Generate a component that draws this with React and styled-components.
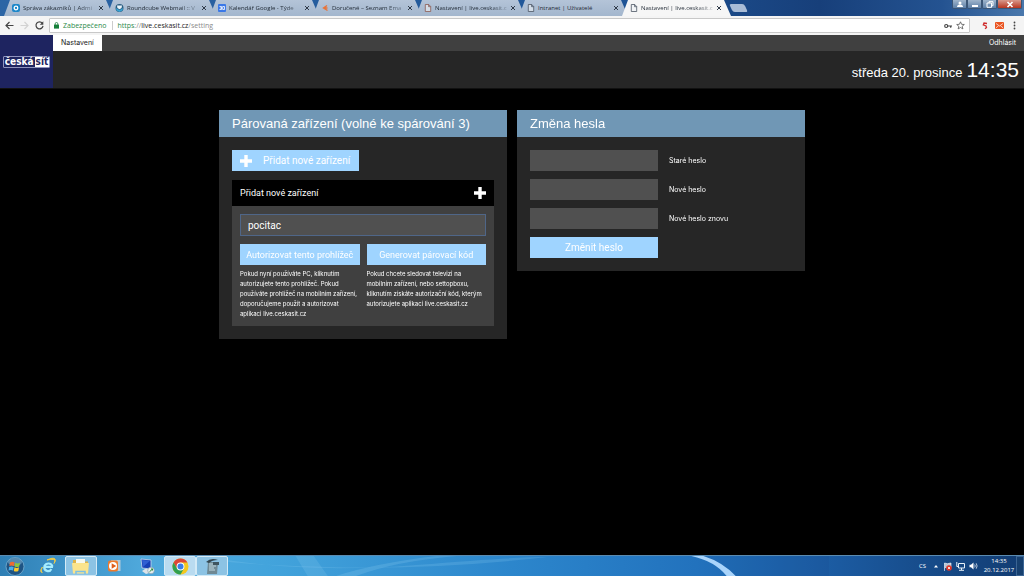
import React, { useState } from "react";
import styled, { createGlobalStyle, css } from "styled-components";

const Global = createGlobalStyle`
  *, *::before, *::after { box-sizing: border-box; }
  body { margin: 0; background: #000; color: #fff; font-family: "Liberation Sans", Arial, sans-serif; }
  button, input { font: inherit; color: inherit; border: 0; margin: 0; padding: 0; border-radius: 0; }
  a { color: inherit; text-decoration: none; }
  h1, h2, p { margin: 0; font-weight: normal; }
`;

const ui = `"Open Sans", "Noto Sans", sans-serif`;
const control = `Roboto, "Liberation Sans", sans-serif`;
const small = `Inter, "Liberation Sans", sans-serif`;

const Screen = styled.div`
  min-height: 100vh;
  display: flex;
  flex-direction: column;
`;

/* Browser window */
const TabStrip = styled.div`
  height: 16px;
  padding-left: 4px;
  display: flex;
  background: linear-gradient(90deg, #2c65a5, #1f5597 60%, #173f7a 80%, #245391 92%, #4a78ac);
  font-family: ${ui};
  font-size: 6px;
  line-height: 14px;
  color: #1f2833;
`;
const Tab = styled.div`
  width: 109px;
  margin-right: -6px;
  padding: 0 9px 0 8px;
  display: flex;
  align-items: center;
  gap: 3px;
  background: ${(p) => (p.$active ? "#f6f6f6" : "linear-gradient(#b4c4d8, #a3b6cd)")};
  clip-path: polygon(6px 0, 102px 0, 109px 100%, 0 100%);
`;
const TabTitle = styled.span`
  flex: 1;
  white-space: nowrap;
  ${(p) => p.$fade && css`mask-image: linear-gradient(90deg, #000 75%, #0004);`}
`;
const TabClose = styled.button`
  width: 6px;
  height: 6px;
  background: none;
  display: flex;
`;
const NewTab = styled.button`
  width: 15px;
  height: 8px;
  margin: 4px 0 0 6px;
  border-radius: 2px;
  background: #a9bcd6;
  transform: skewX(25deg);
`;
const WindowControls = styled.div`
  margin-left: auto;
  padding-right: 2px;
  display: flex;
  height: 9px;
`;
const WindowButton = styled.button`
  width: ${(p) => (p.$close ? 25 : 15)}px;
  display: grid;
  place-items: center;
  background: ${(p) => (p.$close ? "linear-gradient(#d99a8c, #b83620)" : "linear-gradient(#9fb5cc, #5f81a8)")};
  border: 1px solid #3b5676;
  border-top: 0;
  border-radius: 0 0 2px 2px;
`;

const Toolbar = styled.div`
  height: 19px;
  display: flex;
  align-items: center;
  gap: 4px;
  padding: 0 4px;
  background: #f4f4f4;
  font-family: ${ui};
  font-size: 7px;
`;
const ToolButton = styled.button`
  width: 11px;
  height: 11px;
  display: grid;
  place-items: center;
  background: none;
`;
const Omnibox = styled.div`
  flex: 1;
  height: 15px;
  display: flex;
  align-items: center;
  gap: 4px;
  margin-right: 5px;
  padding: 0 4px;
  background: #fff;
  border: 1px solid #c8c8c8;
  border-radius: 1px;
  color: #8a8a8a;
`;
const Secure = styled.span`
  color: #2b8a4a;
  padding-right: 6px;
  border-right: 1px solid #ccc;
  line-height: 9px;
`;
const Url = styled.span`
  flex: 1;
  em { font-style: normal; color: #2b8a4a; }
  b { font-weight: normal; color: #222; }
`;

/* Site header */
const Header = styled.header`
  display: flex;
  height: 54px;
  border-bottom: 1px solid #111;
`;
const Logo = styled.a`
  width: 53px;
  background: #1e2460;
  display: flex;
  align-items: center;
  justify-content: center;
`;
const LogoMark = styled.span`
  display: flex;
  border: 1px solid #8f93bd;
  border-radius: 1px;
  font: bold 10px/10px "DejaVu Sans Condensed", "DejaVu Sans", sans-serif;
  font-stretch: condensed;
`;
const LogoWord = styled.span`
  padding: 0 1px;
  ${(p) => p.$inverse && css`background: #fff; color: #1e2460;`}
`;
const HeaderMain = styled.div`
  flex: 1;
  display: flex;
  flex-direction: column;
`;
const NavBar = styled.nav`
  height: 16px;
  display: flex;
  justify-content: space-between;
  background: #404040;
  font-family: ${small};
  font-size: 7px;
  line-height: 16px;
`;
const NavLink = styled.a`
  padding: 0 8px;
  ${(p) => p.$active && css`background: #fff; color: #222;`}
`;
const Clock = styled.div`
  flex: 1;
  display: flex;
  justify-content: flex-end;
  align-items: baseline;
  gap: 4px;
  padding: 7px 5px 0 0;
  background: #262626;
  font-size: 13px;
  line-height: 24px;
`;
const Time = styled.time`
  font-size: 21px;
`;

/* Settings content */
const Content = styled.main`
  flex: 1;
  width: 100%;
  max-width: 586px;
  margin: 0 auto;
  padding: 21px 0;
  display: grid;
  grid-template-columns: 1fr 1fr;
  gap: 10px;
  align-items: start;
`;
const Panel = styled.section`
  background: #262626;
`;
const PanelTitle = styled.h2`
  height: 27px;
  padding: 0 13px;
  background: #7097b5;
  font-size: 13px;
  line-height: 27px;
`;
const PanelBody = styled.div`
  padding: 13px;
`;
const Button = styled.button`
  height: 21px;
  width: ${(p) => (p.$icon ? "127px" : "100%")};
  display: flex;
  align-items: center;
  justify-content: ${(p) => (p.$icon ? "flex-start" : "center")};
  gap: 11px;
  padding: ${(p) => (p.$icon ? "0 8px" : "0")};
  background: #9fd4ff;
  font-family: ${control};
  font-size: ${(p) => (p.$small ? 9 : 10)}px;
  white-space: nowrap;
`;
const DeviceBox = styled.div`
  margin-top: 9px;
  background: #404040;
`;
const DeviceHead = styled.div`
  height: 26px;
  padding: 0 8px;
  display: flex;
  align-items: center;
  justify-content: space-between;
  background: #000;
  font-family: ${control};
  font-size: 9px;
`;
const DeviceBody = styled.div`
  padding: 8px 8px 7px;
`;
const Field = styled.input`
  display: block;
  width: 100%;
  height: ${(p) => (p.$named ? 22 : 21)}px;
  padding: 0 7px;
  background: #505050;
  outline: none;
  font-family: ${control};
  font-size: 10px;
  ${(p) => p.$named && css`border: 1px solid #4f6688;`}
`;
const Choices = styled.div`
  margin-top: 8px;
  display: grid;
  grid-template-columns: 1fr 1fr;
  gap: 7px;
`;
const Help = styled.p`
  margin-top: 4px;
  font-family: ${small};
  font-size: 6px;
  line-height: 10px;
  white-space: pre;
`;
const PasswordForm = styled.form`
  display: grid;
  grid-template-columns: 128px 1fr;
  column-gap: 11px;
  row-gap: 8px;
  align-items: center;
  font-family: ${small};
  font-size: 7px;
`;

/* Taskbar */
const Taskbar = styled.footer`
  position: relative;
  height: 21px;
  display: flex;
  align-items: stretch;
  background: linear-gradient(90deg, #2f7fb5, #4fa9dc 14%, #43a4dc 26%, #2c86cc 50%, #2272bd 68%, #1b5aa0 82%, #123c72);
  border-top: 1px solid #5b8bb0;
  font-family: ${ui};
  overflow: hidden;
`;
const Streak = styled.svg`
  position: absolute;
  left: 21%;
  top: 0;
  width: 60%;
  height: 100%;
`;
const TaskButton = styled.button`
  position: relative;
  width: ${(p) => p.$w || 33}px;
  display: grid;
  place-items: center;
  background: ${(p) => (p.$open ? (p.$front ? "#b9dbf0" : "#8cc3e4") : "none")};
  border: 1px solid ${(p) => (p.$open ? "#d3eaf6" : "transparent")};
  border-radius: 2px;
`;
const Tray = styled.div`
  position: relative;
  margin-left: auto;
  display: flex;
  align-items: center;
  gap: 4px;
`;
const Lang = styled.span`
  margin-right: 3px;
  font-size: 6px;
`;
const DateTime = styled.div`
  width: 32px;
  margin-left: 1px;
  text-align: center;
  font-size: 6px;
  line-height: 9px;
  white-space: nowrap;
`;
const ShowDesktop = styled.button`
  width: 8px;
  margin-left: -3px;
  align-self: stretch;
  background: #17406f;
  border: 1px solid #3b6594;
`;

const Plus = ({ size }) => (
  <svg width={size} height={size} viewBox="0 0 12 12" aria-hidden="true">
    <path d="M4.3 0h3.4v4.3H12v3.4H7.7V12H4.3V7.7H0V4.3h4.3z" fill="#fff" />
  </svg>
);

const PageIcon = ({ color = "#4b5563" }) => (
  <svg width="8" height="8" viewBox="0 0 8 8">
    <path d="M1.3.5h3.4l2 2v5H1.3zM4.6.5v2.2h2.1" fill="#eef1f5" fillOpacity=".6" stroke={color} strokeWidth=".8" />
  </svg>
);

const favicons = {
  admin: (
    <svg width="8" height="8" viewBox="0 0 8 8"><rect width="8" height="8" rx="2" fill="#1d87c9" /><circle cx="4" cy="4" r="1.8" fill="none" stroke="#fff" strokeWidth="1.3" /></svg>
  ),
  mail: (
    <svg width="9" height="8" viewBox="0 0 9 8"><circle cx="4.5" cy="4" r="4" fill="#2b5d80" /><path d="M2 1.4h5L6.6 4 4.5 5.2 2.4 4z" fill="#e8f4fb" /><path d="M.8 4l3.7 2 3.7-2-.8 2.6-2.9 1.4-2.9-1.4z" fill="#37a1d2" /></svg>
  ),
  calendar: (
    <svg width="8" height="8" viewBox="0 0 8 8"><rect width="8" height="8" rx="1" fill="#3b78e7" /><path d="M1.5 2.5h2v3h-2M2 4h1.5M4.7 2.5h1.8v3H4.7z" fill="none" stroke="#fff" strokeWidth=".8" /></svg>
  ),
  seznam: (
    <svg width="8" height="8" viewBox="0 0 8 8"><path d="M6 1.500L2.500 4l4 2.500M6.500 4H3" fill="none" stroke="#e8743a" strokeWidth="1.400" /></svg>
  ),
  pageRed: <PageIcon color="#8b5a50" />,
  page: <PageIcon />,
};

const tabs = [
  ["admin", "Správa zákazníků | Admi", true],
  ["mail", "Roundcube Webmail :: V", true],
  ["calendar", "Kalendář Google - Týde", true],
  ["seznam", "Doručené – Seznam Ema", true],
  ["pageRed", "Nastavení | live.ceskasit.c", true],
  ["page", "Intranet | Uživatelé", false],
  ["page", "Nastavení | live.ceskasit.c", true],
];

const Browser = () => (
  <>
    <TabStrip>
      {tabs.map(([icon, title, fade], i) => (
        <Tab key={i} $active={i === tabs.length - 1}>
          {favicons[icon]}
          <TabTitle $fade={fade}>{title}</TabTitle>
          <TabClose aria-label="Zavřít kartu">
            <svg width="6" height="6" viewBox="0 0 6 6"><path d="M1 1l4 4M5 1L1 5" stroke="#303a48" strokeWidth="1" /></svg>
          </TabClose>
        </Tab>
      ))}
      <NewTab aria-label="Nová karta" />
      <WindowControls>
        <WindowButton aria-label="Profil"><svg width="8" height="7" viewBox="0 0 8 7"><circle cx="4" cy="2" r="1.5" fill="#fff" /><path d="M1 6q0-2.500 3-2.500T7 6z" fill="#fff" /></svg></WindowButton>
        <WindowButton aria-label="Minimalizovat"><svg width="8" height="7" viewBox="0 0 8 7"><path d="M1 4h6v2H1z" fill="#fff" /></svg></WindowButton>
        <WindowButton aria-label="Obnovit"><svg width="8" height="7" viewBox="0 0 8 7"><path d="M3 2V.7h4v4H5.500M1 2h4.500v4.300H1z" fill="none" stroke="#fff" /></svg></WindowButton>
        <WindowButton $close aria-label="Zavřít"><svg width="8" height="7" viewBox="0 0 8 7"><path d="M1.500 1l5 5m0-5l-5 5" stroke="#fff" strokeWidth="1.600" /></svg></WindowButton>
      </WindowControls>
    </TabStrip>
    <Toolbar>
      <ToolButton aria-label="Zpět"><svg width="9" height="9" viewBox="0 0 9 9"><path d="M8.500 4.500H1M4.500 1L1 4.500 4.500 8" fill="none" stroke="#444" strokeWidth="1.200" /></svg></ToolButton>
      <ToolButton aria-label="Vpřed"><svg width="9" height="9" viewBox="0 0 9 9"><path d="M.5 4.500H8M4.500 1L8 4.500 4.500 8" fill="none" stroke="#d2d2d2" strokeWidth="1.200" /></svg></ToolButton>
      <ToolButton aria-label="Obnovit"><svg width="9" height="9" viewBox="0 0 9 9"><path d="M7.300 2.200A3.500 3.500 0 1 0 8 4.800" fill="none" stroke="#444" strokeWidth="1.200" /><path d="M8.300.3v3.500H4.800z" fill="#444" /></svg></ToolButton>
      <Omnibox>
        <svg width="5" height="7" viewBox="0 0 5 7"><rect y="2.600" width="5" height="4" fill="#16803a" /><path d="M1.200 3V1.800a1.300 1.300 0 0 1 2.600 0V3" fill="none" stroke="#16803a" strokeWidth=".8" /></svg>
        <Secure>Zabezpečeno</Secure>
        <Url><em>https</em>://<b>live.ceskasit.cz</b>/setting</Url>
        <svg width="8" height="6" viewBox="0 0 8 6"><circle cx="2.200" cy="3" r="1.500" fill="none" stroke="#444" strokeWidth="1.200" /><path d="M3.500 3H8M6.700 3v1.800" stroke="#444" strokeWidth="1.200" /></svg>
        <svg width="9" height="9" viewBox="0 0 9 9"><path d="M4.500.8l1.100 2.500 2.700.2-2.100 1.800.7 2.600-2.400-1.400-2.400 1.400.7-2.600L.7 3.500l2.700-.2z" fill="none" stroke="#555" strokeWidth=".8" /></svg>
      </Omnibox>
      <ToolButton aria-label="Seznam"><svg width="6" height="8" viewBox="0 0 6 8"><path d="M5 1.500L2 1 1.300 2.800 4 4 4.500 5.500 3 6.800" fill="none" stroke="#cf2c2c" strokeWidth="1.300" /></svg></ToolButton>
      <ToolButton aria-label="Pošta"><svg width="9" height="7" viewBox="0 0 9 7"><rect width="9" height="7" rx="1" fill="#ea5420" /><path d="M1 1.500l3.500 2.500L8 1.500M1 5.800l2.500-2M8 5.800l-2.500-2" fill="none" stroke="#fff" strokeWidth=".7" /></svg></ToolButton>
      <ToolButton aria-label="Nabídka"><svg width="3" height="9" viewBox="0 0 3 9"><g fill="#444"><circle cx="1.500" cy="1.500" r=".9" /><circle cx="1.500" cy="4.500" r=".9" /><circle cx="1.500" cy="7.500" r=".9" /></g></svg></ToolButton>
    </Toolbar>
  </>
);

const StartBar = () => (
  <Taskbar>
    <Streak viewBox="0 0 610 20" preserveAspectRatio="none">
      <path d="M0 2Q90 18 200 9T330 1Q220 14 110 11T0 2z" fill="#8fd0f5" opacity=".2" />
      <path d="M140 20Q180 5 240 0h-20Q160 7 120 20z" fill="#a8dcf8" opacity=".18" />
      <path d="M98 0l14 20h-20L80 0z" fill="#a8dcf8" opacity=".15" />
      <path d="M473 0Q496 5 508 20h9Q504 6 485 0z" fill="#a9d4fb" />
      <path d="M485 0Q504 6 517 20h93V0z" fill="#123f83" opacity=".1" />
    </Streak>
    <TaskButton $w={30} aria-label="Start">
      <svg width="20" height="19" viewBox="0 0 20 19"><circle cx="10" cy="9.500" r="9" fill="#1e5484" stroke="#78afd0" strokeWidth=".8" /><ellipse cx="10" cy="5" rx="7" ry="4" fill="#8cbfdc" opacity=".5" /><path d="M5 5.500q2.500-1.400 4.500 0l-.7 3.700q-2-1.200-4.500 0z" fill="#ed6a32" /><path d="M10.300 5.700q2.500 1.400 4.700 0l-.8 3.700q-2.200 1.400-4.600 0z" fill="#8cc63e" /><path d="M4.200 10q2.500-1.200 4.500 0L8 13.600q-2-1.300-4.500 0z" fill="#4aaeea" /><path d="M9.500 10.200q2.300 1.400 4.600 0l-.8 3.700q-2.300 1.300-4.500 0z" fill="#fbc82e" /></svg>
    </TaskButton>
    <TaskButton $w={35} aria-label="Internet Explorer">
      <svg width="18" height="18" viewBox="0 0 18 18"><path d="M14 9.800H5.500A3.600 3.600 0 0 0 12.300 12M5.500 9A4.300 4.300 0 0 1 13.500 9.500M5.500 9Q4.500 13 8 14" fill="none" stroke="#a5ecff" strokeWidth="2.200" /><path d="M3.500 15.500Q0 15.500 3.500 10 1 13.500 3 14.500M8 3Q14 0 16 2q1 1.500-1 4.500Q17 3 14.500 2.500 12 2 8 3z" fill="#f5ce45" stroke="#f5ce45" strokeWidth=".9" /></svg>
    </TaskButton>
    <TaskButton $w={32} $open aria-label="Průzkumník">
      <svg width="18" height="17" viewBox="0 0 18 17"><path d="M1 2h5l1.500 1.500H16V15H1z" fill="#dfb448" /><path d="M4 1h9v5H4z" fill="#f7f9ef" /><path d="M0 5h17l-1 10.500H1z" fill="#fbe48c" /><path d="M4 16v-2.500h9V16" fill="none" stroke="#7ac0e5" strokeWidth="1.500" /></svg>
    </TaskButton>
    <TaskButton $w={33} aria-label="Přehrávač">
      <svg width="14" height="14" viewBox="0 0 14 14"><path d="M4 1h9.500v11H4z" fill="#b0cadb" /><rect x="1" y="1.500" width="10" height="11" rx="2" fill="#ee7a2c" /><circle cx="6" cy="7" r="4" fill="#fff" /><path d="M4.700 4.300L9.200 7l-4.500 2.700z" fill="#df5d1a" /></svg>
    </TaskButton>
    <TaskButton $w={34} aria-label="Vzdálená plocha">
      <svg width="16" height="17" viewBox="0 0 16 17"><path d="M2 1l10 1v9L3 10z" fill="#153fb5" stroke="#c9d8ee" strokeWidth=".8" /><path d="M3 2l8 .8L4 9z" fill="#2f5fd2" /><path d="M3 13l3-2h5l2 3-6 2z" fill="#dce3e8" /><circle cx="12" cy="12.500" r="3.300" fill="#e6edf0" stroke="#7a96a6" strokeWidth=".6" /><path d="M10.500 13.800l3-2.800M12 11h1.500v1.500" stroke="#268b35" fill="none" /></svg>
    </TaskButton>
    <TaskButton $w={32} $open $front aria-label="Chrome">
      <svg width="17" height="17" viewBox="0 0 17 17"><circle cx="8.500" cy="8.500" r="8" fill="#f4c81f" /><path d="M1.570 4.500a8 8 0 0 1 13.860 0H8.500l-3.500 6z" fill="#dc4637" /><path d="M1.570 4.500a8 8 0 0 0 6.930 12L12 10.500H5z" fill="#30a050" /><circle cx="8.500" cy="8.500" r="3.900" fill="#fff" /><circle cx="8.500" cy="8.500" r="3" fill="#387ee8" /></svg>
    </TaskButton>
    <TaskButton $w={32} $open aria-label="Editor">
      <svg width="17" height="17" viewBox="0 0 17 17"><path d="M4 4h10l-1 12H3z" fill="#6f8994" /><path d="M5 6h7M5 8h7M5 10h5M5 12h6" stroke="#c5dce4" /><path d="M2 4q5-5 12-2-6 0-9 3z" fill="#33464f" /><path d="M9 4h6v3H9z" fill="#3f555f" /></svg>
    </TaskButton>
    <Tray>
      <Lang>CS</Lang>
      <svg width="6" height="4" viewBox="0 0 6 4"><path d="M1 3.500L3 1l2 2.500z" fill="#fff" /></svg>
      <svg width="9" height="9" viewBox="0 0 9 9"><path d="M1.500 9V1l3 .7L8 1v4.500l-3 .5-3-.5" fill="#b7c5d5" stroke="#fff" strokeWidth=".6" /><circle cx="6" cy="6" r="2.800" fill="#df3226" /><path d="M4.900 4.900l2.200 2.200m0-2.200L4.900 7.100" stroke="#fff" strokeWidth=".8" /></svg>
      <svg width="9" height="9" viewBox="0 0 9 9"><path d="M2.500 1.500h6v4.500h-6zM5.500 6v2M3 8.300h5M.8 0v4.500h1.500" fill="none" stroke="#e7f0f8" /></svg>
      <svg width="9" height="8" viewBox="0 0 9 8"><path d="M.5 2.700H2L4.500.5v7L2 5.300H.5z" fill="#fff" /><path d="M5.700 2.500q1 1.500 0 3M7.200 1.300q1.800 2.700 0 5.400" fill="none" stroke="#fff" strokeWidth=".7" /></svg>
      <DateTime>14:35<br />20.12.2017</DateTime>
      <ShowDesktop aria-label="Zobrazit plochu" />
    </Tray>
  </Taskbar>
);

const passwords = [
  ["old", "Staré heslo"],
  ["new", "Nové heslo"],
  ["again", "Nové heslo znovu"],
];

export default function App() {
  const [name, setName] = useState("pocitac");
  return (
    <Screen>
      <Global />
      <Browser />
      <Header>
        <Logo href="#" aria-label="česká síť">
          <LogoMark><LogoWord>česká</LogoWord><LogoWord $inverse>síť</LogoWord></LogoMark>
        </Logo>
        <HeaderMain>
          <NavBar>
            <NavLink href="#" $active>Nastavení</NavLink>
            <NavLink href="#">Odhlásit</NavLink>
          </NavBar>
          <Clock>
            <span>středa 20. prosince</span>
            <Time>14:35</Time>
          </Clock>
        </HeaderMain>
      </Header>
      <Content>
        <Panel>
          <PanelTitle>Párovaná zařízení (volné ke spárování 3)</PanelTitle>
          <PanelBody>
            <Button $icon><Plus size={12} />Přidat nové zařízení</Button>
            <DeviceBox>
              <DeviceHead>
                <label htmlFor="device">Přidat nové zařízení</label>
                <Plus size={12} />
              </DeviceHead>
              <DeviceBody>
                <Field id="device" $named autoFocus value={name} onChange={(e) => setName(e.target.value)} />
                <Choices>
                  <div>
                    <Button $small>Autorizovat tento prohlížeč</Button>
                    <Help>{"Pokud nyní používáte PC, kliknutím\nautorizujete tento prohlížeč. Pokud\npoužíváte prohlížeč na mobilním zařízení,\ndoporučujeme použít a autorizovat\naplikaci live.ceskasit.cz"}</Help>
                  </div>
                  <div>
                    <Button $small>Generovat párovací kód</Button>
                    <Help>{"Pokud chcete sledovat televizi na\nmobilním zařízení, nebo settopboxu,\nkliknutím získáte autorizační kód, kterým\nautorizujete aplikaci live.ceskasit.cz"}</Help>
                  </div>
                </Choices>
              </DeviceBody>
            </DeviceBox>
          </PanelBody>
        </Panel>
        <Panel>
          <PanelTitle>Změna hesla</PanelTitle>
          <PanelBody>
            <PasswordForm onSubmit={(e) => e.preventDefault()}>
              {passwords.map(([id, label]) => (
                <React.Fragment key={id}>
                  <Field id={id} type="password" />
                  <label htmlFor={id}>{label}</label>
                </React.Fragment>
              ))}
              <Button type="submit">Změnit heslo</Button>
            </PasswordForm>
          </PanelBody>
        </Panel>
      </Content>
      <StartBar />
    </Screen>
  );
}
